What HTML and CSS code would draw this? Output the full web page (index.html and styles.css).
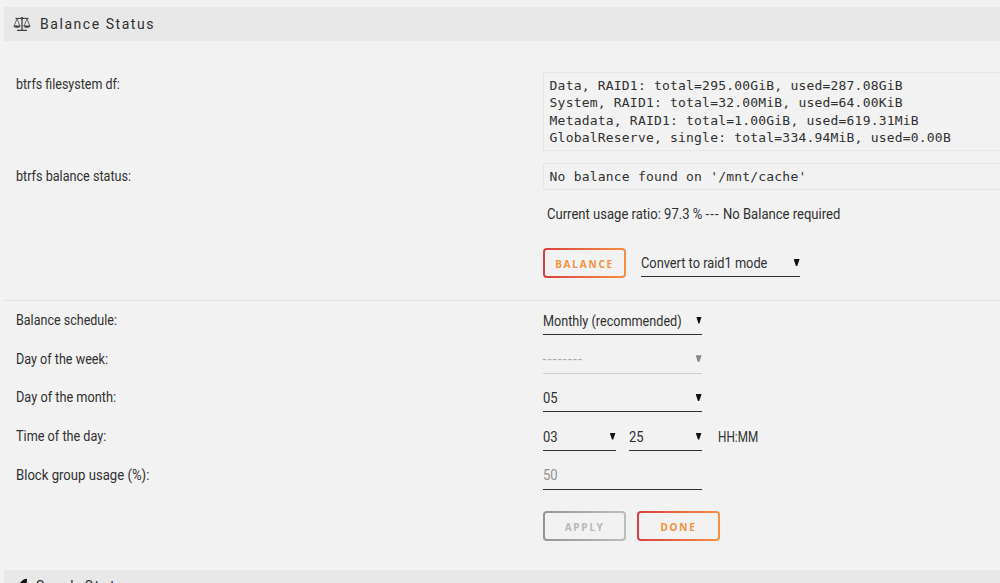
FILE: index.html
```html
<!DOCTYPE html>
<html lang="en">
<head>
<meta charset="utf-8">
<title>Balance Status</title>
<link rel="stylesheet" href="styles.css">
</head>
<body>
<main class="page">
  <h2 class="title">
    <svg class="icon" viewBox="0 0 18 16" fill="none" stroke="#404040">
      <path d="M2.5 2.4H15.5" stroke-width="1.1"/>
      <path d="M9 1V14M4 14.3H14" stroke-width="1.3"/>
      <path d="M4 2.7L1.3 9.8M4 2.7L6.9 9.8M14 2.7L11.1 9.8M14 2.7L16.7 9.8" stroke-width=".8"/>
      <path d="M.7 9.8H7.4C7.1 12.2 1 12.2.7 9.8ZM10.6 9.8H17.3C17 12.2 10.9 12.2 10.6 9.8Z" fill="#404040" stroke-width=".5"/>
      <circle cx="9" cy="2.3" r="1.2" fill="#404040" stroke="none"/>
    </svg>
    <span>Balance Status</span>
  </h2>

  <section class="status">
    <div class="row row-df">
      <div class="label l-df">btrfs filesystem df:</div>
      <pre class="output">Data, RAID1: total=295.00GiB, used=287.08GiB
System, RAID1: total=32.00MiB, used=64.00KiB
Metadata, RAID1: total=1.00GiB, used=619.31MiB
GlobalReserve, single: total=334.94MiB, used=0.00B</pre>
    </div>
    <div class="row row-balance">
      <div class="label l-status">btrfs balance status:</div>
      <pre class="output">No balance found on '/mnt/cache'</pre>
    </div>
    <p class="ratio">Current usage ratio: 97.3 % <span class="dashes">---</span> No Balance required</p>
    <div class="actions">
      <button class="button">Balance</button>
      <div class="select"><span class="t-convert">Convert to raid1 mode</span><i class="arrow"></i></div>
    </div>
  </section>

  <section class="schedule">
    <div class="row"><div class="label l-schedule">Balance schedule:</div>
      <div class="select"><span class="t-monthly">Monthly (recommended)</span><i class="arrow"></i></div></div>
    <div class="row"><div class="label l-week">Day of the week:</div>
      <div class="select disabled"><span class="dashes">--------</span><i class="arrow"></i></div></div>
    <div class="row"><div class="label l-month">Day of the month:</div>
      <div class="select"><span class="num">05</span><i class="arrow"></i></div></div>
    <div class="row"><div class="label l-time">Time of the day:</div>
      <div class="times">
        <div class="select hours"><span class="num">03</span><i class="arrow"></i></div>
        <div class="select minutes"><span class="num">25</span><i class="arrow"></i></div>
        <span class="unit">HH:MM</span>
      </div></div>
    <div class="row"><div class="label l-usage">Block group usage (%):</div>
      <div class="select field"><span class="num">50</span></div></div>
    <div class="buttons">
      <button class="button muted" disabled>Apply</button>
      <button class="button">Done</button>
    </div>
  </section>

  <h2 class="title next">
    <svg class="icon" viewBox="0 0 18 16"><path d="M13 .8C10.7 1 9 2.5 7.7 4.5L4.7 5 2.7 8 5.7 7.8 8.2 10.5 8 14 11 12 11.4 9C13.2 7 14.2 4.1 14 1Z" fill="#111"/></svg>
    <span>Scrub Status</span>
  </h2>
</main>
</body>
</html>
```
FILE: styles.css
```css
* { box-sizing: border-box; }
html, body { margin: 0; height: 583px; overflow: hidden; }
body {
  background: #f2f2f2;
  color: #303030;
  font: 14px/20px Roboto, "Noto Sans", sans-serif;
}
.page { padding: 7px 0 0 4px; height: 583px; overflow: hidden; }
.title {
  display: flex; align-items: center; gap: 9px;
  height: 34px; margin: 0 0 1px; padding: 0 0 1px 9px;
  background: #e8e8e8;
  font-size: 14px; font-weight: 400; letter-spacing: 1.55px;
}
.icon { width: 18px; height: 16px; flex: none; }
.status {
  height: 259px; padding: 30px 0 0 11.6px;
  border-bottom: 1px solid #e3e3e3;
}
.row { display: grid; grid-template-columns: 527px 1fr; align-items: start; }
.row-df { height: 91px; }
.row-balance { height: 32px; }
.label { padding-top: 2px; white-space: nowrap; }
.row-balance .label { padding-top: 3px; }
.output {
  margin: 0; padding: 4px 6px 3px;
  border: 1px solid #e6e6e6; border-right: 0;
  font: 13px/17.4px "DejaVu Sans Mono", monospace;
  letter-spacing: .2px;
}
.row-balance .output { padding-bottom: 4px; }
.ratio {
  margin: 9px 0 24px 531px; line-height: 20px;
  white-space: nowrap;
}

/* Condensed text */
.label, .ratio, .t-convert, .t-monthly, .num, .unit { transform-origin: 0 50%; }
.l-df { transform: scaleX(.892); }
.l-status { transform: scaleX(.902); }
.l-schedule { transform: scaleX(.895); }
.l-week { transform: scaleX(.9); }
.l-month { transform: scaleX(.91); }
.l-time { transform: scaleX(.905); }
.l-usage { transform: scaleX(.938); }
.t-convert { transform: scaleX(.914); }
.t-monthly { transform: scaleX(.902); }
.ratio { transform: scaleX(.932); }
.num { transform: scaleX(.93); }
.unit { transform: scaleX(.84); }

.dashes { letter-spacing: 1.2px; }
.actions { display: flex; gap: 15px; margin-left: 527px; }
.actions .select span { padding-top: 2px; }
.actions .arrow { margin-top: 1px; }
.button {
  width: 83px; height: 30px; padding: 2px 0 0 1px;
  border: 2px solid transparent; border-radius: 4px;
  background: linear-gradient(#f2f2f2, #f2f2f2) padding-box,
              linear-gradient(90deg, #d93f40, #f59140) border-box;
  color: #f3913f;
  font: 700 10px/20px "Noto Sans", sans-serif;
  letter-spacing: 1.8px; text-transform: uppercase;
}
.button.muted {
  background: linear-gradient(#f2f2f2, #f2f2f2) padding-box,
              linear-gradient(90deg, #949494, #bdbdbd) border-box;
  color: #b8b8b8;
}
.select {
  display: flex; justify-content: space-between; align-items: center;
  width: 159px; height: 29px;
  border-bottom: 1px solid #303030;
  white-space: nowrap;
}
.select span { padding-top: 1px; }
.arrow {
  width: 6px; height: 7px;
  background: #111; clip-path: polygon(0 0, 100% 0, 60% 100%, 40% 100%);
}
.disabled { color: #aaa; border-color: #cfcfcf; }
.disabled .arrow { background: #888; }
.schedule { padding: 5px 0 0 11.6px; }
.schedule .row { height: 38.7px; }
.schedule .label { padding-top: 4px; }
.times { display: flex; gap: 13px; }
.hours { width: 73px; }
.minutes { width: 73px; }
.unit { margin-left: 3px; padding-top: 5px; }
.field { color: #909090; }
.buttons { display: flex; gap: 11px; margin: 12px 0 0 527px; }
.next { margin-top: 29px; gap: 5px; padding-bottom: 2px; }
```
